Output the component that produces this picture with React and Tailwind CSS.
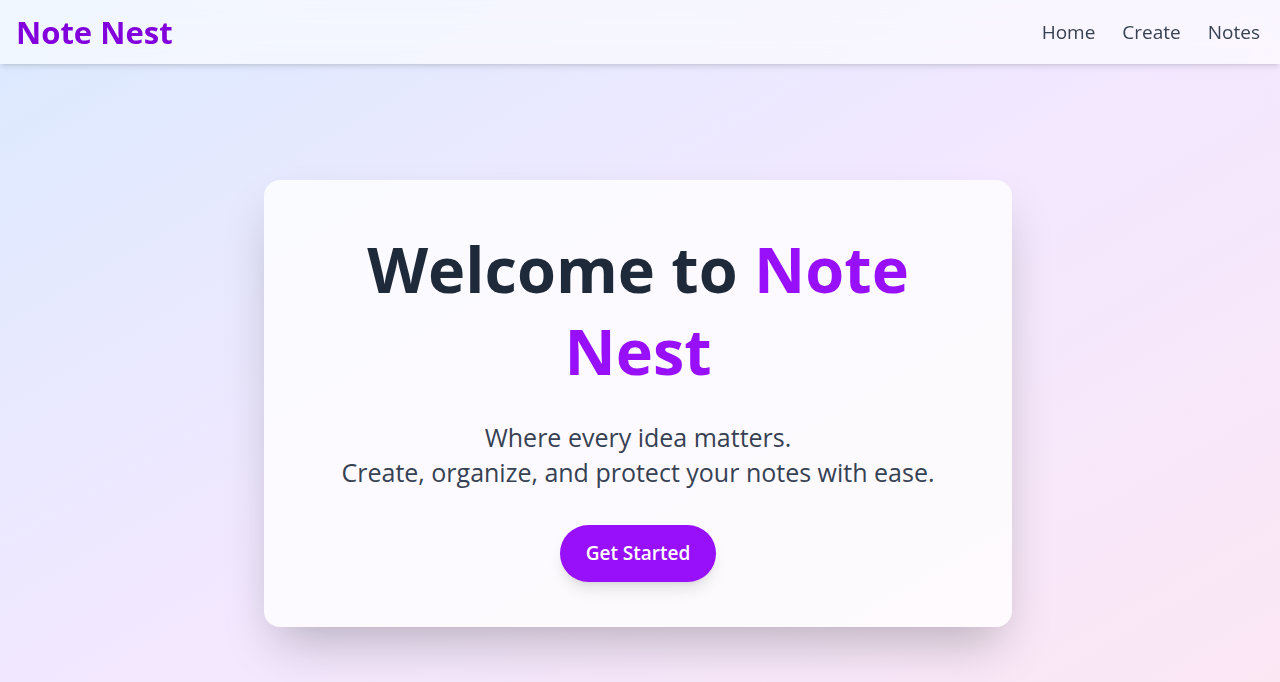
export default function App() {
  return (
    <div
      className="min-h-screen bg-gradient-to-br from-blue-100 via-purple-100 to-pink-100 text-gray-800"
      style={{ fontFamily: '"Open Sans", "Noto Sans", sans-serif' }}
    >
      <header className="h-16 bg-white/60 backdrop-blur-md shadow-md flex items-center justify-between pl-4 pr-5">
        <a href="#" className="text-[31px] font-bold text-purple-700">
          Note Nest
        </a>
        <nav className="flex items-center gap-[27px] text-[19px] font-medium text-gray-700">
          <a href="#">Home</a>
          <a href="#">Create</a>
          <a href="#">Notes</a>
        </nav>
      </header>

      <main className="min-h-screen flex items-center justify-center px-4 pb-1">
        <div className="w-[748px] -ml-1 bg-white/80 rounded-2xl shadow-2xl px-12 pt-12 pb-[45px] flex flex-col items-center text-center">
          <h1 className="text-[63px] leading-[82px] font-bold text-gray-800">
            Welcome to <span className="text-purple-600">Note Nest</span>
          </h1>
          <p className="mt-7 text-[25px] leading-[35px] text-gray-700">
            Where every idea matters.
            <br />
            Create, organize, and protect your notes with ease.
          </p>
          <button className="mt-[35px] h-[57px] px-[26px] rounded-full bg-purple-600 text-white text-[19px] font-semibold shadow-lg">
            Get Started
          </button>
        </div>
      </main>
    </div>
  );
}
